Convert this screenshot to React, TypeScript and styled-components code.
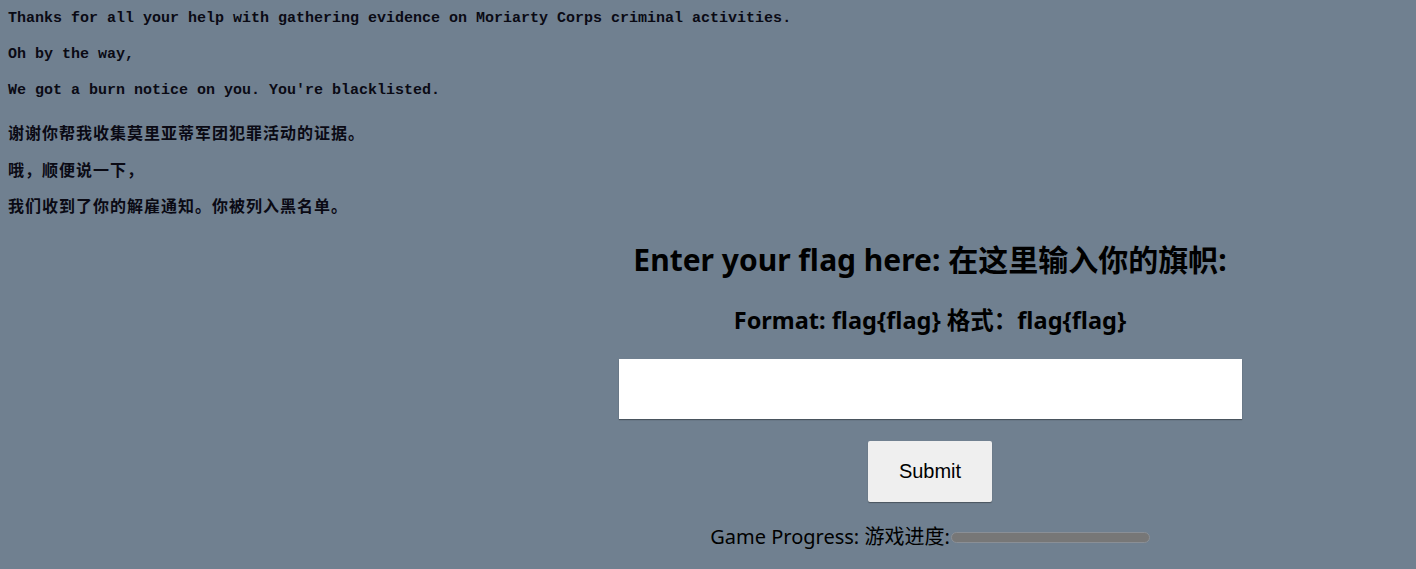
import React from "react";
import styled, { createGlobalStyle } from "styled-components";

const GlobalStyle = createGlobalStyle`
  html, body {
    margin: 0;
    padding: 0;
    background: #708090;
  }
  * { box-sizing: border-box; }
`;

const Page = styled.div`
  min-height: 569px;
  background: #708090;
  padding: 10px 0 0 8px;
  color: #0a0a14;
`;

const Block = styled.div<{ $gap: number }>`
  display: flex;
  flex-direction: column;
  gap: ${(p) => p.$gap}px;
`;

const MonoLine = styled.p`
  margin: 0;
  font-family: "Liberation Mono", "DejaVu Sans Mono", monospace;
  font-weight: bold;
  font-size: 15px;
  line-height: 18px;
  white-space: pre;
`;

const CnLine = styled.p`
  margin: 0;
  font-family: "Noto Sans CJK SC", "Noto Sans", sans-serif;
  font-weight: bold;
  font-size: 16px;
  letter-spacing: 1px;
  line-height: 18px;
`;

const TextArea = styled.div`
  display: flex;
  flex-direction: column;
  gap: 23px;
`;

const FormSection = styled.section`
  margin-top: 26px;
  margin-left: 436px;
  display: flex;
  flex-direction: column;
  align-items: center;
  font-family: "Noto Sans", "Noto Sans CJK SC", sans-serif;
  color: #000;
`;

const Heading = styled.h1`
  margin: 0;
  font-size: 30px;
  font-weight: bold;
  line-height: 40px;
`;

const SubHeading = styled.h2`
  margin: 25px 0 0;
  font-size: 23.5px;
  font-weight: bold;
  line-height: 30px;
`;

const FlagInput = styled.input`
  margin-top: 24px;
  width: 623px;
  height: 60px;
  border: none;
  background: #fff;
  box-shadow: 0 1px 1px rgba(0, 0, 0, 0.35);
  outline: none;
  font-size: 18px;
  padding: 0 10px;
`;

const SubmitButton = styled.button`
  margin-top: 22px;
  width: 124px;
  height: 61px;
  border: none;
  border-radius: 2px;
  background: #efefef;
  box-shadow: 0 1px 1px rgba(0, 0, 0, 0.35);
  font-family: "Liberation Sans", Arial, sans-serif;
  font-size: 20px;
  color: #000;
  cursor: pointer;
`;

const ProgressRow = styled.div`
  margin-top: 23px;
  display: flex;
  align-items: center;
  font-size: 20px;
  line-height: 24px;
  font-weight: normal;
`;

const ProgressTrack = styled.div`
  width: 199px;
  height: 11px;
  border-radius: 6px;
  background: #777777;
  border: 1px solid #8a8f96;
  margin-left: 1px;
  margin-top: 1px;
`;

export default function App() {
  return (
    <>
      <GlobalStyle />
      <Page>
        <TextArea>
          <Block $gap={18}>
            <MonoLine>Thanks for all your help with gathering evidence on Moriarty Corps criminal activities.</MonoLine>
            <MonoLine>Oh by the way,</MonoLine>
            <MonoLine>We got a burn notice on you. You're blacklisted.</MonoLine>
          </Block>
          <Block $gap={18.5}>
            <CnLine>谢谢你帮我收集莫里亚蒂军团犯罪活动的证据。</CnLine>
            <CnLine>哦，顺便说一下，</CnLine>
            <CnLine>我们收到了你的解雇通知。你被列入黑名单。</CnLine>
          </Block>
        </TextArea>
        <FormSection>
          <Heading>Enter your flag here: 在这里输入你的旗帜:</Heading>
          <SubHeading>Format: flag{"{flag}"} 格式：flag{"{flag}"}</SubHeading>
          <FlagInput type="text" aria-label="flag" />
          <SubmitButton type="button">Submit</SubmitButton>
          <ProgressRow>
            <span>Game Progress: 游戏进度:</span>
            <ProgressTrack />
          </ProgressRow>
        </FormSection>
      </Page>
    </>
  );
}
